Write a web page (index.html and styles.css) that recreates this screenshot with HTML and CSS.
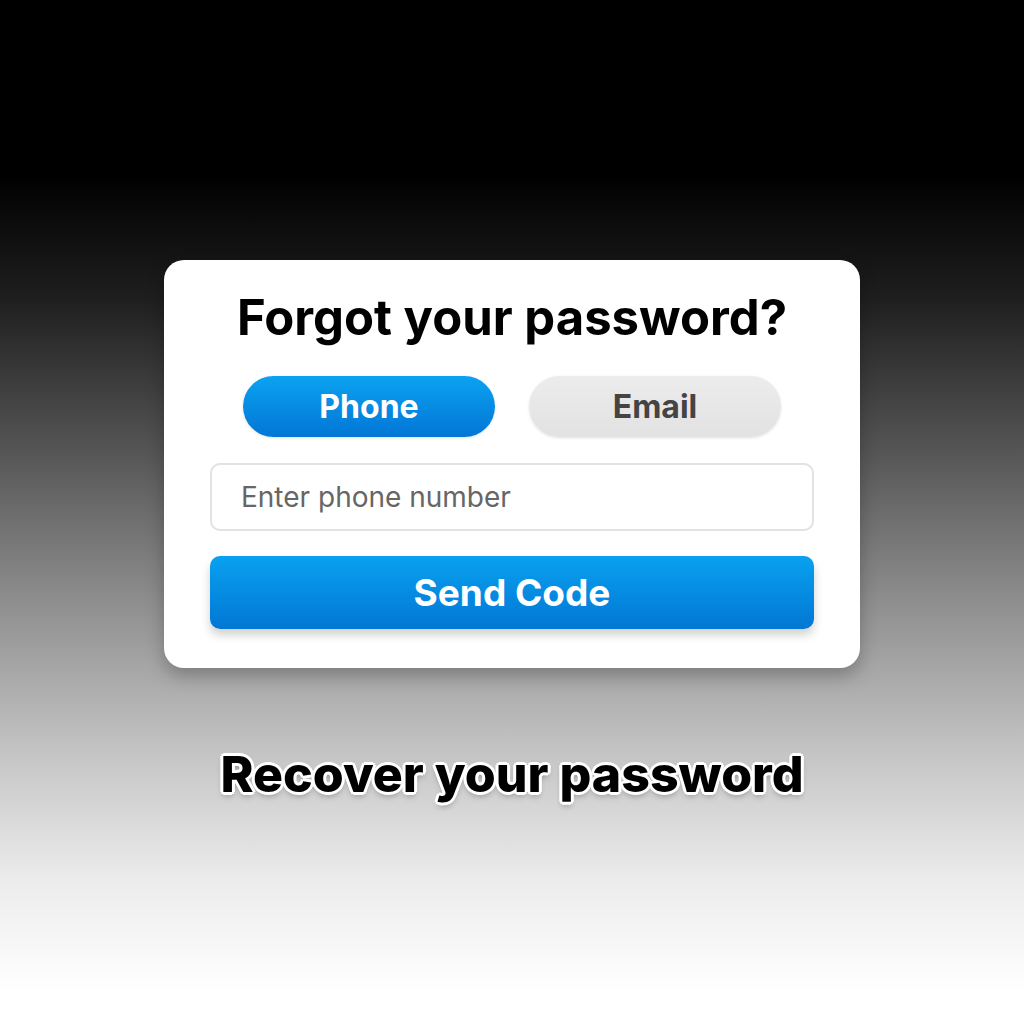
FILE: index.html
```html
<!DOCTYPE html>
<html lang="en">
<head>
    <meta charset="UTF-8">
    <meta name="viewport" content="width=device-width, initial-scale=1.0">
    <title>Forgot your password?</title>
    <link rel="stylesheet" href="styles.css">
</head>
<body>
    <div class="card">
        <h1>Forgot your password?</h1>
        <div class="toggle">
            <button class="tab active">Phone</button>
            <button class="tab">Email</button>
        </div>
        <input type="tel" class="field" placeholder="Enter phone number">
        <button class="send">Send Code</button>
    </div>

    <p class="caption">Recover your password</p>
</body>
</html>
```

FILE: styles.css
```css
html, body {
    margin: 0;
    height: 1024px;
}
body {
    font-family: Inter, "Liberation Sans", Arial, sans-serif;
    background: linear-gradient(#000 0%, #000 17%, #1e1e1e 29%, #555 44%, #8f8f8f 59%, #c6c6c6 74%, #ececec 86%, #fff 97%);
    display: flex;
    flex-direction: column;
    align-items: center;
    padding-top: 260px;
    box-sizing: border-box;
}
.card {
    width: 696px;
    box-sizing: border-box;
    background-color: #fff;
    border-radius: 20px;
    padding: 29px 46px 39px;
    box-shadow: 0 8px 18px rgba(0,0,0,0.25);
    display: flex;
    flex-direction: column;
}
.card h1 {
    margin: 0 0 28px;
    font-size: 49px;
    line-height: 1.2;
    text-align: center;
    color: #000;
}
.toggle {
    display: flex;
    justify-content: center;
    gap: 34px;
    margin-bottom: 26px;
}
.tab {
    width: 252px;
    height: 61px;
    border: none;
    border-radius: 31px;
    font-family: inherit;
    font-size: 32px;
    font-weight: bold;
    color: #444;
    background: linear-gradient(#ececec, #e2e2e2);
    box-shadow: 0 1px 3px rgba(0,0,0,0.12);
    cursor: pointer;
}
.tab.active {
    color: #fff;
    background: linear-gradient(#0ba2f0, #0276d6);
}
.field {
    height: 68px;
    box-sizing: border-box;
    border: 2px solid #e2e2e2;
    border-radius: 10px;
    padding: 0 29px;
    font-family: inherit;
    font-size: 28px;
    color: #333;
    margin-bottom: 25px;
}
.field::placeholder {
    color: #666;
}
.field:focus {
    outline: none;
    border-color: #0aa0ef;
}
.send {
    height: 73px;
    border: none;
    border-radius: 10px;
    font-family: inherit;
    font-size: 37px;
    font-weight: bold;
    color: #fff;
    background: linear-gradient(#09a1f0, #0277d4);
    box-shadow: 0 6px 10px rgba(0,0,0,0.18);
    cursor: pointer;
}
.caption {
    margin: 76px 0 0;
    font-size: 50px;
    line-height: 1.2;
    font-weight: 800;
    color: #000;
    text-shadow:
        2px 0 0 #fff, -2px 0 0 #fff, 0 2px 0 #fff, 0 -2px 0 #fff,
        2px 2px 0 #fff, -2px 2px 0 #fff, 2px -2px 0 #fff, -2px -2px 0 #fff,
        3px 0 0 #fff, -3px 0 0 #fff, 0 3px 0 #fff, 0 -3px 0 #fff,
        0 4px 6px rgba(0,0,0,0.3);
}
```
